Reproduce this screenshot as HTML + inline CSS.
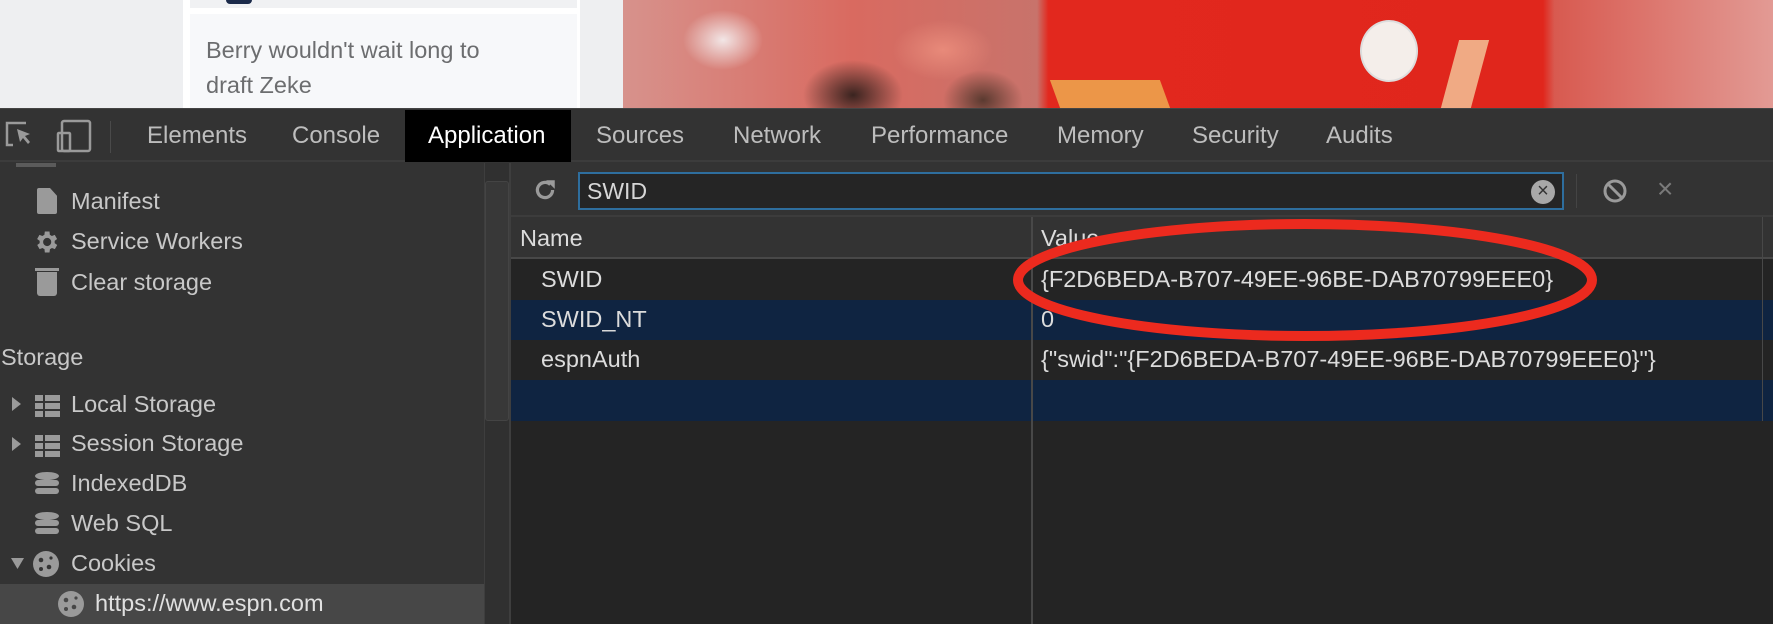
<!DOCTYPE html>
<html><head><meta charset="utf-8"><style>
*{margin:0;padding:0;box-sizing:border-box}
body{width:1773px;height:624px;overflow:hidden;background:#333;font-family:"Liberation Sans",Helvetica,sans-serif;position:relative}
.a{position:absolute}
.t{position:absolute;font-size:24px;color:#bdbdbd;top:122px}
.s{position:absolute;font-size:23.5px;color:#c8c8c8;left:71px}
.r{position:absolute;font-size:23.5px;color:#dcdcdc}
.ic{position:absolute;background:#9a9a9a}
</style></head><body>
<div class="a" style="left:0;top:0;width:623px;height:108px;background:#eeeff1"></div>
<div class="a" style="left:183px;top:0;width:397px;height:108px;background:#fff"></div>
<div class="a" style="left:190px;top:0;width:387px;height:8px;background:#f0f1f3"></div>
<div class="a" style="left:190px;top:14px;width:387px;height:94px;background:#f7f8fa"></div>
<div class="a" style="left:226px;top:0;width:26px;height:4px;background:#1b2a4a;border-radius:0 0 12px 12px"></div>
<div class="a" style="left:206px;top:33px;font-size:23.5px;line-height:35px;color:#6c6d6f">Berry wouldn't wait long to<br>draft Zeke</div>
<div class="a" style="left:623px;top:0;width:1150px;height:108px;background:
radial-gradient(ellipse 40px 30px at 100px 40px,#f2e6e6,transparent),
radial-gradient(ellipse 50px 35px at 230px 95px,#3a2420,transparent),
radial-gradient(ellipse 50px 30px at 320px 50px,#e88a7a,transparent),
radial-gradient(ellipse 40px 30px at 360px 100px,#5a3a30,transparent),
linear-gradient(90deg,#d7928c 0%,#d96a60 20%,#c8736b 36%,#e2281e 37%,#e0261c 80%,#d85a50 81%,#e29a94 100%)"></div>
<div class="a" style="left:1360px;top:20px;width:58px;height:62px;border-radius:50%;background:#f4eeea;border:2px solid #ddd"></div>
<div class="a" style="left:1055px;top:80px;width:110px;height:28px;background:#f1c55a;transform:skewX(20deg);opacity:.7"></div>
<div class="a" style="left:1450px;top:40px;width:30px;height:68px;background:#f7e2b0;transform:skewX(-15deg);opacity:.7"></div>
<div class="a" style="left:0;top:108px;width:1773px;height:54px;background:#333;border-top:1px solid #444;border-bottom:2px solid #3c3c3c"></div>
<svg class="a" style="left:4px;top:119px" width="90" height="36" viewBox="0 0 90 36" fill="none" stroke="#9a9a9a" stroke-width="2.5">
<path d="M14 4H3v22h6M22 4H14"/><path d="M13 10l13 5-5 2 5 6-2 2-5-6-3 4z" fill="#9a9a9a" stroke="none"/>
<rect x="58" y="2" width="28" height="30" rx="2"/><rect x="54" y="14" width="12" height="18" rx="1"/>
</svg>
<div class="a" style="left:110px;top:121px;width:1px;height:32px;background:#4a4a4a"></div>
<div class="t" style="left:147px">Elements</div>
<div class="t" style="left:292px">Console</div>
<div class="a" style="left:405px;top:110px;width:166px;height:52px;background:#000"></div>
<div class="t" style="left:428px;color:#fff">Application</div>
<div class="t" style="left:596px">Sources</div>
<div class="t" style="left:733px">Network</div>
<div class="t" style="left:871px">Performance</div>
<div class="t" style="left:1057px">Memory</div>
<div class="t" style="left:1192px">Security</div>
<div class="t" style="left:1326px">Audits</div>
<div class="a" style="left:0;top:163px;width:484px;height:461px;background:#333"></div>
<div class="a" style="left:484px;top:163px;width:27px;height:461px;background:#303030;border-left:1px solid #3e3e3e;border-right:2px solid #3e3e3e"></div>
<div class="a" style="left:485px;top:181px;width:24px;height:240px;background:#383838;border:1px solid #444;border-radius:3px"></div>
<div class="a" style="left:16px;top:163px;width:40px;height:4px;background:#777;opacity:.6"></div>
<div class="ic" style="left:37px;top:188px;width:20px;height:26px;border-radius:2px;clip-path:polygon(0 0,65% 0,100% 30%,100% 100%,0 100%)"></div>
<div class="s" style="top:188px">Manifest</div>
<svg class="a" style="left:32px;top:228px" width="28" height="28" viewBox="0 0 24 24"><path fill="#9a9a9a" d="M19.4 13a7.5 7.5 0 000-2l2.1-1.6-2-3.5-2.5 1a7 7 0 00-1.7-1L15 3h-4l-.4 2.9a7 7 0 00-1.7 1l-2.5-1-2 3.5L6.6 11a7.5 7.5 0 000 2l-2.1 1.6 2 3.5 2.5-1a7 7 0 001.7 1L11 21h4l.4-2.9a7 7 0 001.7-1l2.5 1 2-3.5zM13 15.5A3.5 3.5 0 1113 8.5a3.5 3.5 0 010 7z"/></svg>
<div class="s" style="top:228px">Service Workers</div>
<div class="ic" style="left:35px;top:268px;width:24px;height:3px"></div>
<div class="ic" style="left:37px;top:272px;width:20px;height:24px;border-radius:0 0 3px 3px"></div>
<div class="s" style="top:269px">Clear storage</div>
<div class="s" style="left:1px;top:344px">Storage</div>
<svg class="a" style="left:12px;top:397px" width="12" height="60"><path d="M0 0l9 7-9 7z M0 40l9 7-9 7z" fill="#9a9a9a"/></svg>
<svg class="a" style="left:35px;top:395px" width="26" height="62" fill="#9a9a9a"><rect x="0" y="0" width="8" height="6"/><rect x="10" y="0" width="15" height="6"/><rect x="0" y="8" width="8" height="6"/><rect x="10" y="8" width="15" height="6"/><rect x="0" y="16" width="8" height="6"/><rect x="10" y="16" width="15" height="6"/>
<rect x="0" y="40" width="8" height="6"/><rect x="10" y="40" width="15" height="6"/><rect x="0" y="48" width="8" height="6"/><rect x="10" y="48" width="15" height="6"/><rect x="0" y="56" width="8" height="6"/><rect x="10" y="56" width="15" height="6"/></svg>
<div class="s" style="top:391px">Local Storage</div>
<div class="s" style="top:430px">Session Storage</div>
<svg class="a" style="left:34px;top:472px" width="26" height="68" fill="#9a9a9a"><ellipse cx="13" cy="4" rx="12" ry="4"/><rect x="1" y="8" width="24" height="6" rx="3"/><rect x="1" y="16" width="24" height="6" rx="3"/>
<ellipse cx="13" cy="44" rx="12" ry="4"/><rect x="1" y="48" width="24" height="6" rx="3"/><rect x="1" y="56" width="24" height="6" rx="3"/></svg>
<div class="s" style="top:470px">IndexedDB</div>
<div class="s" style="top:510px">Web SQL</div>
<svg class="a" style="left:11px;top:558px" width="14" height="12"><path d="M0 0h13l-6.5 11z" fill="#9a9a9a"/></svg>
<svg class="a" style="left:32px;top:550px" width="28" height="28"><circle cx="14" cy="14" r="13" fill="#9a9a9a"/><g fill="#333"><circle cx="9" cy="10" r="2.3"/><circle cx="17" cy="17" r="2.3"/><circle cx="9" cy="19" r="2"/><circle cx="19" cy="8" r="1.6"/></g></svg>
<div class="s" style="top:550px">Cookies</div>
<div class="a" style="left:0;top:584px;width:484px;height:40px;background:#474747"></div>
<svg class="a" style="left:57px;top:590px" width="28" height="28"><circle cx="14" cy="14" r="13" fill="#9a9a9a"/><g fill="#474747"><circle cx="9" cy="10" r="2.3"/><circle cx="17" cy="17" r="2.3"/><circle cx="9" cy="19" r="2"/><circle cx="19" cy="8" r="1.6"/></g></svg>
<div class="s" style="left:95px;top:590px;color:#e0e0e0">https://www.espn.com</div>
<div class="a" style="left:511px;top:163px;width:1262px;height:54px;background:#333;border-bottom:2px solid #3c3c3c"></div>
<svg class="a" style="left:532px;top:177px" width="26" height="26" viewBox="0 0 24 24"><path d="M19 12a7 7 0 11-2.1-5" fill="none" stroke="#9a9a9a" stroke-width="3"/><path d="M13 3h8v8z" fill="#9a9a9a"/></svg>
<div class="a" style="left:578px;top:172px;width:986px;height:38px;background:#252525;border:2px solid #2e6e9e"></div>
<div class="a" style="left:587px;top:178px;font-size:23px;color:#d6d6d6">SWID</div>
<div class="a" style="left:1531px;top:180px;width:24px;height:24px;border-radius:50%;background:#a8a8a8;color:#333;font-size:20px;line-height:23px;text-align:center">×</div>
<div class="a" style="left:1576px;top:174px;width:1px;height:34px;background:#444"></div>
<svg class="a" style="left:1602px;top:178px" width="26" height="26"><circle cx="13" cy="13" r="10" fill="none" stroke="#9a9a9a" stroke-width="3"/><path d="M6 6l14 14" stroke="#9a9a9a" stroke-width="3"/></svg>
<div class="a" style="left:1657px;top:173px;font-size:28px;color:#7a7a7a">×</div>
<div class="a" style="left:511px;top:217px;width:1262px;height:42px;background:#333;border-bottom:2px solid #484848"></div>
<div class="r" style="left:520px;top:225px">Name</div>
<div class="r" style="left:1041px;top:225px">Value</div>
<div class="a" style="left:511px;top:259px;width:1262px;height:365px;background:#242424"></div>
<div class="a" style="left:511px;top:300px;width:1262px;height:40px;background:#0f2441"></div>
<div class="a" style="left:511px;top:380px;width:1262px;height:41px;background:#0f2441"></div>
<div class="a" style="left:1031px;top:217px;width:2px;height:407px;background:#484848"></div>
<div class="a" style="left:1762px;top:217px;width:1px;height:204px;background:#484848"></div>
<div class="r" style="left:541px;top:266px">SWID</div>
<div class="r" style="left:1041px;top:266px">{F2D6BEDA-B707-49EE-96BE-DAB70799EEE0}</div>
<div class="r" style="left:541px;top:306px">SWID_NT</div>
<div class="r" style="left:1041px;top:306px">0</div>
<div class="r" style="left:541px;top:346px">espnAuth</div>
<div class="r" style="left:1041px;top:346px">{"swid":"{F2D6BEDA-B707-49EE-96BE-DAB70799EEE0}"}</div>
<svg class="a" style="left:0;top:0" width="1773" height="624"><ellipse cx="1305" cy="280" rx="287" ry="56" fill="none" stroke="#ec2a1e" stroke-width="10"/></svg>
</body></html>
